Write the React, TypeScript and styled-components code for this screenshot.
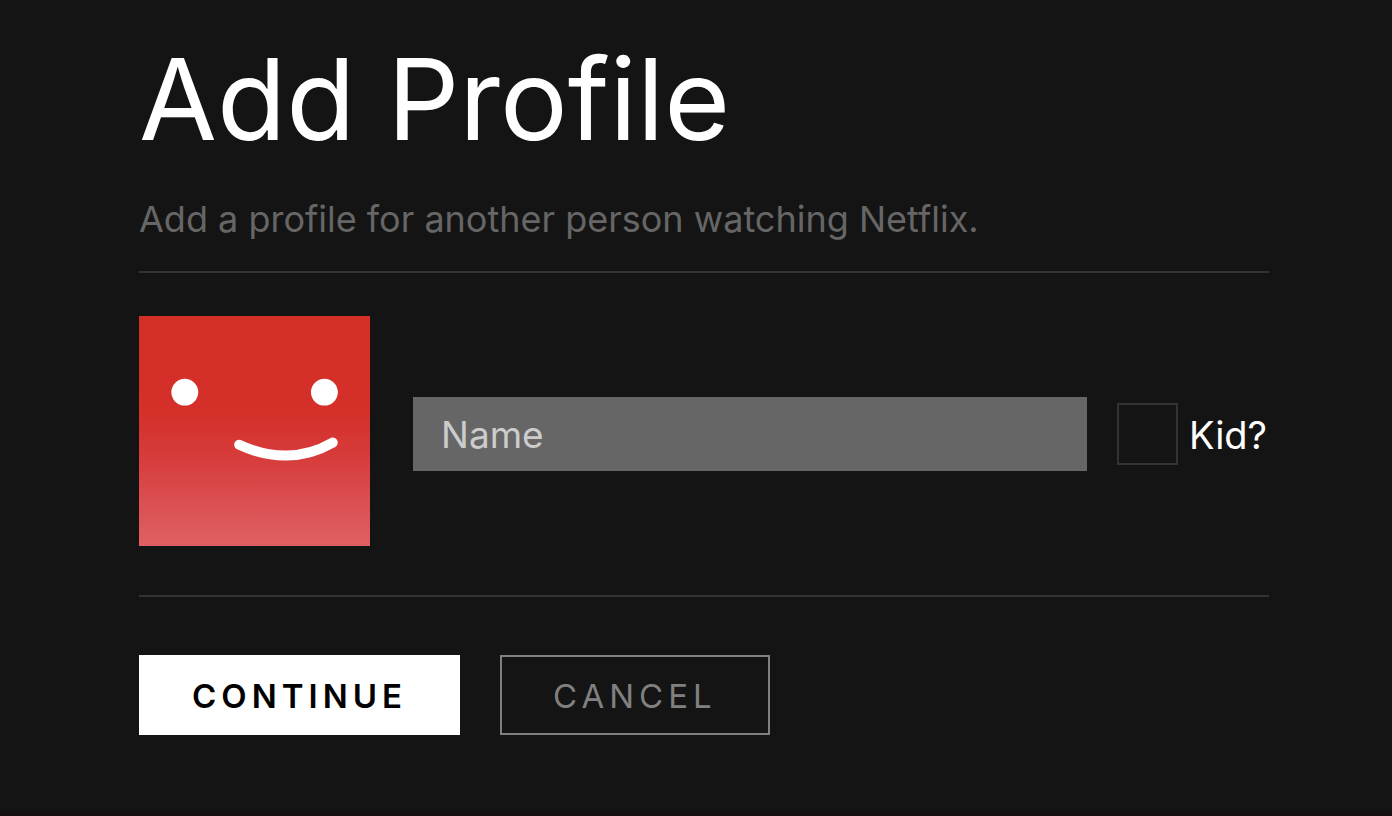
import React, { useState } from "react";
import styled, { createGlobalStyle } from "styled-components";

const GlobalStyle = createGlobalStyle`
  *, *::before, *::after { box-sizing: border-box; }
  body {
    margin: 0;
    background: #141414;
    color: #fff;
    font-family: Inter, "Liberation Sans", sans-serif;
  }
`;

const Page = styled.div`
  display: flex;
  flex-direction: column;
  min-height: 100vh;
  border-bottom: 4px solid #150f12;
`;

const Content = styled.main`
  padding: 31px 123px 64px 139px;
`;

const Title = styled.h1`
  margin: 0;
  font-size: 113px;
  font-weight: 400;
  line-height: 136px;
`;

const Subtitle = styled.p`
  margin: 29px 0 28px;
  font-size: 36px;
  line-height: 47px;
  color: #666;
`;

const ProfileRow = styled.div`
  display: flex;
  align-items: center;
  padding: 43px 0 49px;
  border-top: 2px solid #333;
  border-bottom: 2px solid #333;
`;

const Avatar = styled.svg`
  display: block;
  flex: none;
  width: 231px;
  height: 230px;
`;

const Fields = styled.div`
  display: flex;
  flex: 1;
  align-items: center;
  gap: 30px;
  min-width: 0;
  margin-left: 43px;
  padding-top: 6px;
`;

const NameInput = styled.input`
  flex: 1;
  min-width: 0;
  height: 74px;
  padding: 0 28px;
  border: 0;
  border-radius: 0;
  background: #666;
  color: #fff;
  font: inherit;
  font-size: 37px;
  &::placeholder { color: #ccc; opacity: 1; }
`;

const KidLabel = styled.label`
  display: flex;
  align-items: center;
  gap: 11px;
  min-width: 152px;
  font-size: 38px;
  line-height: 46px;
`;

const KidText = styled.span`
  padding-top: 2px;
`;

const KidCheckbox = styled.input`
  appearance: none;
  width: 61px;
  height: 62px;
  margin: 0;
  border: 2px solid #333;
  background: #141414;
  &:checked { background: #666; }
`;

const Actions = styled.div`
  display: flex;
  gap: 40px;
  padding-top: 58px;
`;

const Button = styled.button<{ $primary?: boolean }>`
  height: 80px;
  padding: 2px 51px 0;
  border: 2px solid ${(p) => (p.$primary ? "#fff" : "#808080")};
  border-radius: 0;
  background: ${(p) => (p.$primary ? "#fff" : "transparent")};
  color: ${(p) => (p.$primary ? "#000" : "#808080")};
  font-family: inherit;
  font-size: 33px;
  font-weight: ${(p) => (p.$primary ? 600 : 400)};
  letter-spacing: 5px;
  text-transform: uppercase;
  cursor: pointer;
`;

export default function App() {
  const [name, setName] = useState("");
  const [kid, setKid] = useState(false);

  return (
    <Page>
      <GlobalStyle />
      <Content>
        <Title>Add Profile</Title>
        <Subtitle>Add a profile for another person watching Netflix.</Subtitle>
        <form onSubmit={(e) => e.preventDefault()}>
          <ProfileRow>
            <Avatar viewBox="0 0 231 230" aria-hidden="true">
              <defs>
                <linearGradient id="face" x1="0" y1="0" x2="0" y2="1">
                  <stop offset="0" stopColor="#d42f27" />
                  <stop offset="0.4" stopColor="#d42f28" />
                  <stop offset="0.6" stopColor="#d63b3a" />
                  <stop offset="0.8" stopColor="#da4e50" />
                  <stop offset="1" stopColor="#df6064" />
                </linearGradient>
              </defs>
              <rect width="231" height="230" fill="url(#face)" />
              <circle cx="45.8" cy="76.2" r="13.4" fill="#fff" />
              <circle cx="185.4" cy="76.2" r="13.4" fill="#fff" />
              <path
                d="M100.200 128.700 C131 143.200 164 143.800 193.700 126.600"
                fill="none"
                stroke="#fff"
                strokeWidth="10"
                strokeLinecap="round"
              />
            </Avatar>
            <Fields>
              <NameInput
                type="text"
                aria-label="Name"
                placeholder="Name"
                value={name}
                onChange={(e) => setName(e.target.value)}
              />
              <KidLabel>
                <KidCheckbox
                  type="checkbox"
                  checked={kid}
                  onChange={(e) => setKid(e.target.checked)}
                />
                <KidText>Kid?</KidText>
              </KidLabel>
            </Fields>
          </ProfileRow>
          <Actions>
            <Button type="submit" $primary>Continue</Button>
            <Button type="button">Cancel</Button>
          </Actions>
        </form>
      </Content>
    </Page>
  );
}
